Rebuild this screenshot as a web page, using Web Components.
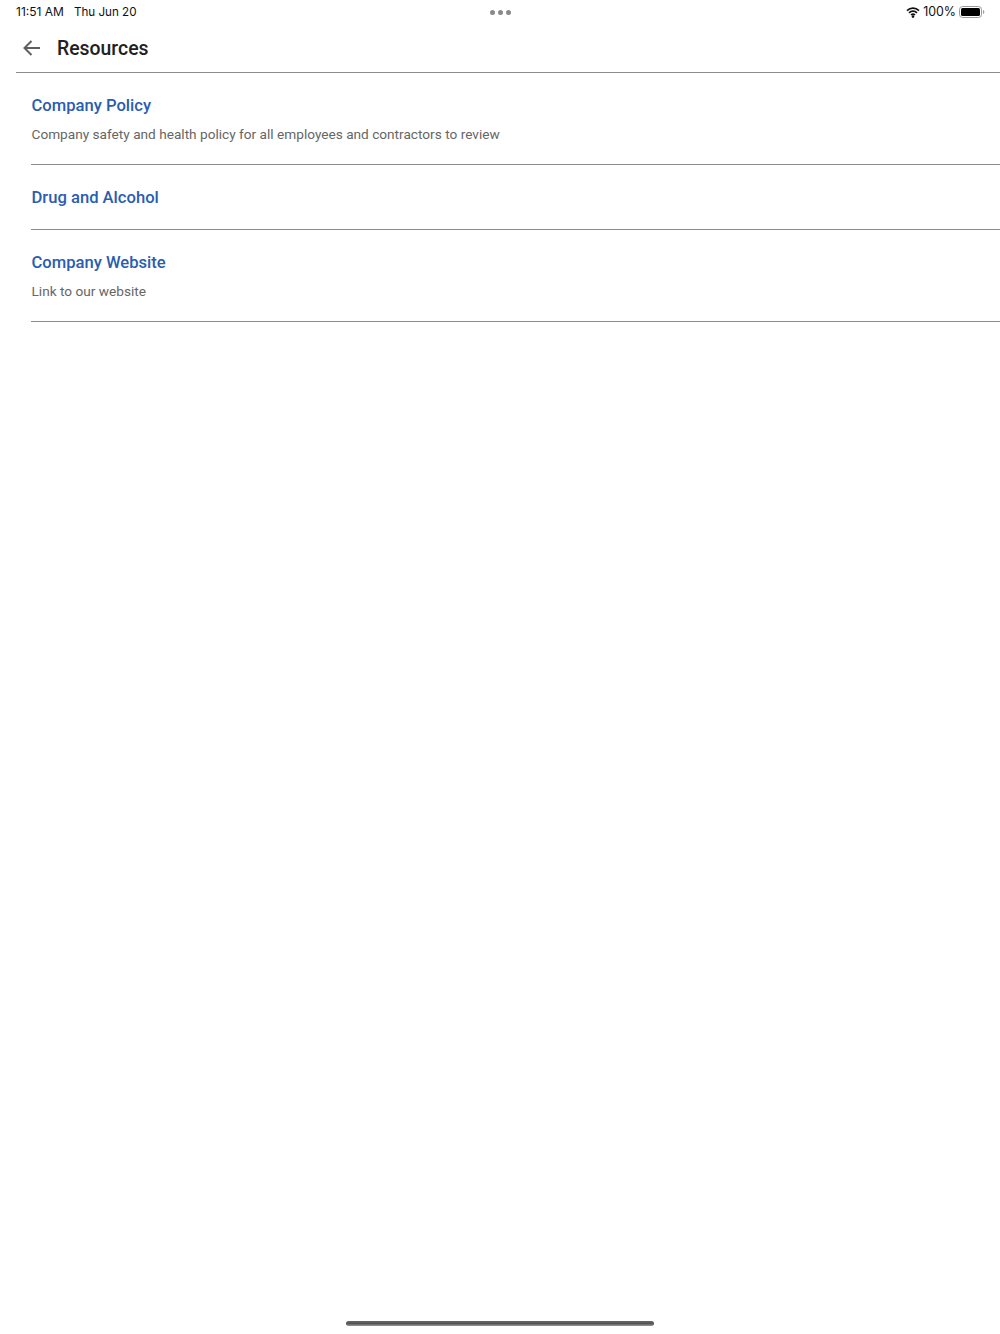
<!DOCTYPE html>
<html><head><meta charset="utf-8"><style>
html,body{margin:0;padding:0;background:#fff;height:1334px;overflow:hidden;font-family:Roboto,sans-serif}
body{display:flex;flex-direction:column}
</style></head><body>
<status-bar></status-bar>
<app-header>Resources</app-header>
<resource-list>
<resource-item title="Company Policy">Company safety and health policy for all employees and contractors to review</resource-item>
<resource-item title="Drug and Alcohol"></resource-item>
<resource-item title="Company Website">Link to our website</resource-item>
</resource-list>
<home-bar></home-bar>
<script>
function def(name,html){customElements.define(name,class extends HTMLElement{constructor(){super();this.attachShadow({mode:'open'}).innerHTML=html;}});}
def('status-bar',`<style>
:host{display:grid;grid-template-columns:1fr auto 1fr;align-items:center;height:24px;padding:0 15px 0 16px;font:12px/24px Inter,sans-serif;color:#111;}
.l{display:flex;gap:10px}.r{display:flex;justify-content:flex-end;align-items:center}
.date{font-size:11.65px}
.pct{font-size:12.4px}
.dots{display:flex;gap:3px;margin-left:-1px}.dots i{width:5px;height:5px;border-radius:50%;background:#8a8a8a}
svg{display:block}
</style>
<div class="l"><span>11:51 AM</span><span class="date">Thu Jun 20</span></div>
<div class="dots"><i></i><i></i><i></i></div>
<div class="r">
<svg width="14" height="11" viewBox="0 0 14 11" style="margin-right:3px"><path d="M1 3.6a8.6 8.6 0 0 1 12 0M3 5.800a5.800 5.800 0 0 1 8 0M5 8a2.900 2.900 0 0 1 4 0" fill="none" stroke="#111" stroke-width="1.7"/><circle cx="7" cy="9.6" r="1.3" fill="#111"/></svg>
<span class="pct">100%</span>
<svg width="26" height="12" viewBox="0 0 26 12" style="margin-left:3px"><rect x=".5" y=".5" width="22" height="11" rx="3" fill="none" stroke="#999"/><rect x="2" y="2" width="19" height="8" rx="1.6" fill="#000"/><path d="M24 4v4c.8-.3 1.3-1.100 1.300-2s-.5-1.700-1.300-2z" fill="#999"/></svg>
</div>`);
def('app-header',`<style>
:host{display:flex;align-items:center;height:48px;margin-left:16px;border-bottom:1px solid #8c8c8c;color:#212121;font:500 19.4px/24px Roboto,sans-serif}
svg{display:block;margin-right:16px;}
.label{margin-top:2px}
</style>
<svg width="25" height="24" viewBox="0 0 25 24"><path d="M24 12H8.500M15.500 5l-7 7 7 7" fill="none" stroke="#5f5f5f" stroke-width="2"/></svg>
<span class="label"><slot></slot></span>`);
def('resource-list',`<style>:host{display:flex;flex-direction:column;margin-left:31px}</style><slot></slot>`);
customElements.define('resource-item',class extends HTMLElement{constructor(){super();const s=this.attachShadow({mode:'open'});s.innerHTML=`<style>
:host{display:flex;flex-direction:column;padding:21px 0 19px;border-bottom:1px solid #8c8c8c}
.t{font:500 16.6px/24px Roboto,sans-serif;color:#2a5db0;padding-left:.5px}
.d{font:400 13.65px/20px Roboto,sans-serif;color:#666;margin:6px 0 1px;padding-left:.5px}
:host(.e) .d{display:none}
</style><div class="t"></div><div class="d"><slot></slot></div>`;
s.querySelector('.t').textContent=this.getAttribute('title');
if(!this.textContent.trim())this.classList.add('e');}});
def('home-bar',`<style>:host{display:block;position:absolute;left:346px;top:1321px;width:308px;height:5px;border-radius:3px;background:linear-gradient(#666,#555 50%,#999)}</style>`);
</script>
</body></html>
